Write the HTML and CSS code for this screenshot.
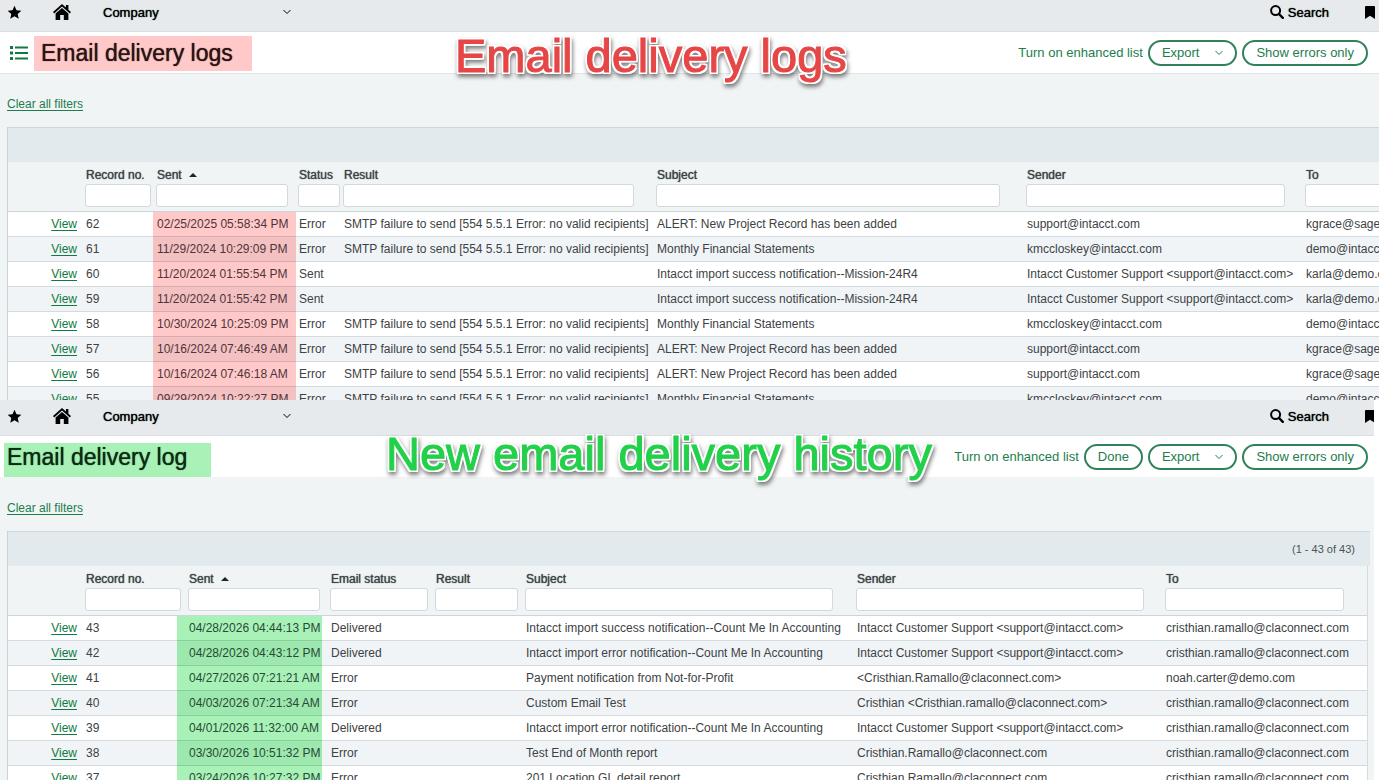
FILE: index.html
```
<!DOCTYPE html>
<html lang="en">
<head>
  <meta charset="utf-8">
  <title>Email delivery logs</title>
  <link rel="stylesheet" href="styles.css">
</head>
<body>
  <!-- shared icons -->
  <svg class="sprite" width="0" height="0">
    <symbol id="star" viewBox="0 0 24 24"><path d="M12 1l3.2 7.2 7.8.8-5.900 5.200 1.700 7.800L12 18l-6.800 4 1.700-7.800L1 9l7.800-.8z"/></symbol>
    <symbol id="home" viewBox="0 0 18 16"><path d="M9 0L0 8l1.200 1.400L9 2.600l7.800 6.800L18 8l-2.600-2.300V1h-2.500v2.500z"/><path d="M9 4L2.600 9.500V16h4.600v-5h3.600v5h4.600V9.500z"/></symbol>
    <symbol id="chevron" viewBox="0 0 8 6"><path d="M.5 1l3.500 3.500L7.500 1" fill="none" stroke="currentColor" stroke-width="1"/></symbol>
    <symbol id="search" viewBox="0 0 14 14"><circle cx="5.600" cy="5.600" r="4.500" fill="none" stroke="currentColor" stroke-width="2"/><path d="M9 9l3.800 3.800" stroke="currentColor" stroke-width="2.400" stroke-linecap="round"/></symbol>
    <symbol id="bookmark" viewBox="0 0 10 13"><path d="M1 0h8a1 1 0 0 1 1 1v12L5 9.800 0 13V1a1 1 0 0 1 1-1z"/></symbol>
    <symbol id="list" viewBox="0 0 18 14"><path d="M0 0h3v3H0zM0 5.500h3v3H0zM0 11h3v3H0zM5 .5h13v2H5zM5 6h13v2H5zM5 11.500h13v2H5z"/></symbol>
  </svg>

  <section class="panel logs">
    <nav class="topbar">
      <a href="#" class="star" aria-label="Favorites"><svg width="15" height="15"><use href="#star"/></svg></a>
      <a href="#" class="home" aria-label="Home"><svg width="18" height="16"><use href="#home"/></svg></a>
      <button type="button" class="menu">Company <svg width="8" height="6"><use href="#chevron"/></svg></button>
      <button type="button" class="search"><svg width="14" height="14"><use href="#search"/></svg> Search</button>
      <a href="#" class="bookmark" aria-label="Bookmarks"><svg width="10" height="13"><use href="#bookmark"/></svg></a>
    </nav>

    <header class="titlebar">
      <button type="button" class="list-button" aria-label="List"><svg width="18" height="14"><use href="#list"/></svg></button>
      <h1>Email delivery logs</h1>
      <div class="actions">
        <a href="#" class="enhanced">Turn on enhanced list</a>
        <button type="button" class="pill export">Export <svg width="8" height="6"><use href="#chevron"/></svg></button>
        <button type="button" class="pill">Show errors only</button>
      </div>
    </header>

    <a href="#" class="clear">Clear all filters</a>

    <div class="grid">
      <div class="pager"></div>
      <table>
        <colgroup>
          <col class="c-view"><col class="c-record"><col class="c-sent"><col class="c-status"><col class="c-result"><col class="c-subject"><col class="c-sender"><col>
        </colgroup>
        <thead>
          <tr>
            <th></th>
            <th><label for="a-record">Record no.</label><input type="text" id="a-record"></th>
            <th class="sent"><label for="a-sent">Sent <span class="sort"></span></label><input type="text" id="a-sent"></th>
            <th class="status"><label for="a-status">Status</label><input type="text" id="a-status"></th>
            <th><label for="a-result">Result</label><input type="text" id="a-result"></th>
            <th><label for="a-subject">Subject</label><input type="text" id="a-subject"></th>
            <th><label for="a-sender">Sender</label><input type="text" id="a-sender"></th>
            <th><label for="a-to">To</label><input type="text" id="a-to"></th>
          </tr>
        </thead>
        <tbody>
          <tr><td class="view"><a href="#">View</a></td><td>62</td><td class="sent">02/25/2025 05:58:34 PM</td><td class="status">Error</td><td>SMTP failure to send [554 5.5.1 Error: no valid recipients]</td><td>ALERT: New Project Record has been added</td><td>support@intacct.com</td><td>kgrace@sagedemo.com</td></tr>
          <tr><td class="view"><a href="#">View</a></td><td>61</td><td class="sent">11/29/2024 10:29:09 PM</td><td class="status">Error</td><td>SMTP failure to send [554 5.5.1 Error: no valid recipients]</td><td>Monthly Financial Statements</td><td>kmccloskey@intacct.com</td><td>demo@intacct.com</td></tr>
          <tr><td class="view"><a href="#">View</a></td><td>60</td><td class="sent">11/20/2024 01:55:54 PM</td><td class="status">Sent</td><td></td><td>Intacct import success notification--Mission-24R4</td><td>Intacct Customer Support &lt;support@intacct.com&gt;</td><td>karla@demo.com</td></tr>
          <tr><td class="view"><a href="#">View</a></td><td>59</td><td class="sent">11/20/2024 01:55:42 PM</td><td class="status">Sent</td><td></td><td>Intacct import success notification--Mission-24R4</td><td>Intacct Customer Support &lt;support@intacct.com&gt;</td><td>karla@demo.com</td></tr>
          <tr><td class="view"><a href="#">View</a></td><td>58</td><td class="sent">10/30/2024 10:25:09 PM</td><td class="status">Error</td><td>SMTP failure to send [554 5.5.1 Error: no valid recipients]</td><td>Monthly Financial Statements</td><td>kmccloskey@intacct.com</td><td>demo@intacct.com</td></tr>
          <tr><td class="view"><a href="#">View</a></td><td>57</td><td class="sent">10/16/2024 07:46:49 AM</td><td class="status">Error</td><td>SMTP failure to send [554 5.5.1 Error: no valid recipients]</td><td>ALERT: New Project Record has been added</td><td>support@intacct.com</td><td>kgrace@sagedemo.com</td></tr>
          <tr><td class="view"><a href="#">View</a></td><td>56</td><td class="sent">10/16/2024 07:46:18 AM</td><td class="status">Error</td><td>SMTP failure to send [554 5.5.1 Error: no valid recipients]</td><td>ALERT: New Project Record has been added</td><td>support@intacct.com</td><td>kgrace@sagedemo.com</td></tr>
          <tr><td class="view"><a href="#">View</a></td><td>55</td><td class="sent">09/29/2024 10:22:27 PM</td><td class="status">Error</td><td>SMTP failure to send [554 5.5.1 Error: no valid recipients]</td><td>Monthly Financial Statements</td><td>kmccloskey@intacct.com</td><td>demo@intacct.com</td></tr>
        </tbody>
      </table>
    </div>

    <div class="callout">Email delivery logs</div>
  </section>

  <section class="panel history">
    <nav class="topbar">
      <a href="#" class="star" aria-label="Favorites"><svg width="15" height="15"><use href="#star"/></svg></a>
      <a href="#" class="home" aria-label="Home"><svg width="18" height="16"><use href="#home"/></svg></a>
      <button type="button" class="menu">Company <svg width="8" height="6"><use href="#chevron"/></svg></button>
      <button type="button" class="search"><svg width="14" height="14"><use href="#search"/></svg> Search</button>
      <a href="#" class="bookmark" aria-label="Bookmarks"><svg width="10" height="13"><use href="#bookmark"/></svg></a>
    </nav>

    <header class="titlebar">
      <h1>Email delivery log</h1>
      <div class="actions">
        <a href="#" class="enhanced">Turn on enhanced list</a>
        <button type="button" class="pill">Done</button>
        <button type="button" class="pill export">Export <svg width="8" height="6"><use href="#chevron"/></svg></button>
        <button type="button" class="pill">Show errors only</button>
      </div>
    </header>

    <a href="#" class="clear">Clear all filters</a>

    <div class="grid">
      <div class="pager">(1 - 43 of 43)</div>
      <table>
        <colgroup>
          <col class="c-view"><col class="c-record"><col class="c-sent"><col class="c-status"><col class="c-result"><col class="c-subject"><col class="c-sender"><col>
        </colgroup>
        <thead>
          <tr>
            <th></th>
            <th><label for="b-record">Record no.</label><input type="text" id="b-record"></th>
            <th class="sent"><label for="b-sent">Sent <span class="sort"></span></label><input type="text" id="b-sent"></th>
            <th class="status"><label for="b-status">Email status</label><input type="text" id="b-status"></th>
            <th><label for="b-result">Result</label><input type="text" id="b-result"></th>
            <th><label for="b-subject">Subject</label><input type="text" id="b-subject"></th>
            <th><label for="b-sender">Sender</label><input type="text" id="b-sender"></th>
            <th><label for="b-to">To</label><input type="text" id="b-to"></th>
          </tr>
        </thead>
        <tbody>
          <tr><td class="view"><a href="#">View</a></td><td>43</td><td class="sent">04/28/2026 04:44:13 PM</td><td class="status">Delivered</td><td></td><td>Intacct import success notification--Count Me In Accounting</td><td>Intacct Customer Support &lt;support@intacct.com&gt;</td><td>cristhian.ramallo@claconnect.com</td></tr>
          <tr><td class="view"><a href="#">View</a></td><td>42</td><td class="sent">04/28/2026 04:43:12 PM</td><td class="status">Delivered</td><td></td><td>Intacct import error notification--Count Me In Accounting</td><td>Intacct Customer Support &lt;support@intacct.com&gt;</td><td>cristhian.ramallo@claconnect.com</td></tr>
          <tr><td class="view"><a href="#">View</a></td><td>41</td><td class="sent">04/27/2026 07:21:21 AM</td><td class="status">Error</td><td></td><td>Payment notification from Not-for-Profit</td><td>&lt;Cristhian.Ramallo@claconnect.com&gt;</td><td>noah.carter@demo.com</td></tr>
          <tr><td class="view"><a href="#">View</a></td><td>40</td><td class="sent">04/03/2026 07:21:34 AM</td><td class="status">Error</td><td></td><td>Custom Email Test</td><td>Cristhian &lt;Cristhian.ramallo@claconnect.com&gt;</td><td>cristhian.ramallo@claconnect.com</td></tr>
          <tr><td class="view"><a href="#">View</a></td><td>39</td><td class="sent">04/01/2026 11:32:00 AM</td><td class="status">Delivered</td><td></td><td>Intacct import error notification--Count Me In Accounting</td><td>Intacct Customer Support &lt;support@intacct.com&gt;</td><td>cristhian.ramallo@claconnect.com</td></tr>
          <tr><td class="view"><a href="#">View</a></td><td>38</td><td class="sent">03/30/2026 10:51:32 PM</td><td class="status">Error</td><td></td><td>Test End of Month report</td><td>Cristhian.Ramallo@claconnect.com</td><td>cristhian.ramallo@claconnect.com</td></tr>
          <tr><td class="view"><a href="#">View</a></td><td>37</td><td class="sent">03/24/2026 10:27:32 PM</td><td class="status">Error</td><td></td><td>201 Location GL detail report</td><td>Cristhian.Ramallo@claconnect.com</td><td>cristhian.ramallo@claconnect.com</td></tr>
        </tbody>
      </table>
    </div>

    <div class="callout">New email delivery history</div>
  </section>
</body>
</html>
```

FILE: styles.css
```
* {
  box-sizing: border-box;
}

body {
  display: grid;
  grid-template-rows: 400fr 380fr;
  height: 100vh;
  margin: 0;
  overflow: hidden;
  background: #fff;
  color: #3c4245;
  font-family: "Liberation Sans", Arial, sans-serif;
  font-size: 12px;
}

button {
  font-family: inherit;
  border: none;
  background: none;
  padding: 0;
  cursor: pointer;
}

svg {
  display: block;
  fill: currentColor;
}

.sprite {
  position: absolute;
}

.panel {
  position: relative;
  min-height: 0;
  min-width: 0;
  overflow: hidden;
  background: #f0f4f5;
}

.history {
  margin-right: 5px;
}

/* top navigation */
.topbar {
  display: flex;
  align-items: center;
  height: 32px;
  padding: 0 4px 7px 7px;
  background: #e6eaec;
  border-bottom: 1px solid #d8dee1;
  color: #000;
}

.history .topbar {
  height: 36px;
  margin-right: -1px;
  padding-top: 4px;
  padding-right: 0;
}

.topbar a {
  color: #000;
}

.home {
  margin-left: 31px;
}

.menu,
.search {
  display: flex;
  align-items: center;
  font-size: 13px;
  color: #000;
  text-shadow: 0 0 1px #000;
}

.menu {
  justify-content: space-between;
  width: 188px;
  margin-left: 32px;
}

.search {
  gap: 4px;
  margin-left: auto;
}

.bookmark {
  margin-left: 36px;
}

/* page title */
.titlebar {
  display: flex;
  align-items: center;
  height: 42px;
  padding: 0 11px 0 10px;
  background: #fff;
  border-bottom: 1px solid #dfe5e8;
}

.history .titlebar {
  padding: 0 6px 0 4px;
  border-bottom-color: #f0f4f5;
}

.list-button {
  color: #0f7a41;
}

h1 {
  width: 218px;
  margin: 2px 0 0 6px;
  padding: 0 7px;
  background: #ffc9c9;
  color: #2b1414;
  font-size: 23px;
  font-weight: normal;
  line-height: 35px;
  text-shadow: 0 0 1px currentColor;
}

.history h1 {
  align-self: flex-end;
  width: 207px;
  height: 34px;
  margin: 0;
  padding: 0 3px;
  background: #a8f2b8;
  color: #0c2b14;
  line-height: 28px;
}

.actions {
  display: flex;
  align-items: center;
  gap: 5px;
  margin-left: auto;
}

.enhanced {
  color: #1d7d4c;
  font-size: 13px;
  text-decoration: none;
}

.pill {
  display: flex;
  align-items: center;
  height: 26px;
  padding: 0 12px;
  border: 2px solid #2f8259;
  border-radius: 13px;
  background: #fff;
  color: #1d7d4c;
  font-size: 13px;
}

.export {
  gap: 16px;
}

.clear {
  display: block;
  width: max-content;
  margin: 22px 0 0 7px;
  color: #1d7d4c;
  line-height: 16px;
  text-underline-offset: 2px;
}

/* list */
.grid {
  margin: 15px 0 0 7px;
  border-left: 1px solid #c9d4d9;
}

.history .grid {
  margin-right: 4px;
}

.pager {
  height: 35px;
  padding: 0 15px;
  background: #e2eaed;
  border-top: 1px solid #cbd7dc;
  color: #4a5559;
  font-size: 11px;
  line-height: 35px;
  text-align: right;
}

table {
  width: 100%;
  table-layout: fixed;
  border-collapse: separate;
  border-spacing: 0;
}

.history table {
  width: calc(100% - 2px);
  border-right: 1px solid #d3dce0;
}

th {
  height: 50px;
  padding: 5px 0 0;
  border-bottom: 1px solid #ccd5d9;
  font-weight: normal;
  text-align: left;
  vertical-align: top;
  text-shadow: 0 0 1px #3c4245;
}

label {
  display: block;
  padding-left: 1px;
  line-height: 17px;
}

th input {
  display: block;
  height: 23px;
  border: 1px solid #cfd9de;
  border-radius: 3px;
  background: #fff;
}

.sort {
  display: inline-block;
  margin: 0 0 2px 4px;
  border: 4px solid transparent;
  border-top: none;
  border-bottom: 4px solid #222;
}

td {
  height: 25px;
  padding: 0 0 0 1px;
  border-bottom: 1px solid #d3dbdf;
  background: #fff;
  line-height: 24px;
  white-space: nowrap;
}

tr:nth-child(even) td {
  background: #f1f4f6;
}

.view {
  padding: 0 8px 0 0;
  text-align: right;
}

.view a {
  color: #0f7a41;
  text-underline-offset: 2px;
}

.c-view { width: 77px; }

.logs .c-record { width: 68px; }
.logs .c-sent { width: 143px; }
.logs .c-status { width: 47px; }
.logs .c-result { width: 313px; }
.logs .c-subject { width: 370px; }
.logs .c-sender { width: 279px; }

.history .c-record { width: 92px; }
.history .c-sent { width: 145px; }
.history .c-status { width: 113px; }
.history .c-result { width: 90px; }
.history .c-subject { width: 331px; }
.history .c-sender { width: 309px; }

#a-record { width: 66px; }
#a-sent, #b-sent { width: 132px; }
#a-status { width: 42px; }
#a-result { width: 291px; }
#a-subject { width: 344px; }
#a-sender { width: 259px; }
#a-to { width: 180px; }

#b-record { width: 96px; }
#b-status { width: 98px; }
#b-result { width: 83px; }
#b-subject { width: 308px; }
#b-sender { width: 288px; }
#b-to { width: 179px; }

.logs th.sent { padding-left: 3px; }
.logs td.sent { padding-left: 4px; }
.logs th.status { padding-left: 2px; }
.logs td.status { padding-left: 3px; }
.history th.sent { padding-left: 11px; }
.history td.sent { padding-left: 12px; }
.history th.status { padding-left: 8px; }
.history td.status { padding-left: 9px; }

/* highlighted dates */
.logs td.sent {
  background: #ffc9c9;
  border-bottom-color: #d9abae;
  color: #4f3538;
}

.logs tr:nth-child(even) td.sent {
  background: #f4c1c3;
}

.history td.sent {
  background: #a8f2b8;
  border-bottom-color: #8bcd9b;
  color: #284a35;
}

.history tr:nth-child(even) td.sent {
  background: #9de8ae;
}

/* big captions over the panels */
.callout {
  position: absolute;
  top: 29px;
  left: 455px;
  color: #e64646;
  font-size: 47px;
  line-height: 54px;
  white-space: nowrap;
  -webkit-text-stroke: 1px currentColor;
  text-shadow: 2px 0 #fff, -2px 0 #fff, 0 2px #fff, 0 -2px #fff,
    2px 2px #fff, -2px 2px #fff, 2px -2px #fff, -2px -2px #fff;
  filter: drop-shadow(1px 3px 2px rgba(0, 0, 0, 0.5));
}

.history .callout {
  top: 27px;
  left: 386px;
  color: #22d04a;
}
```
